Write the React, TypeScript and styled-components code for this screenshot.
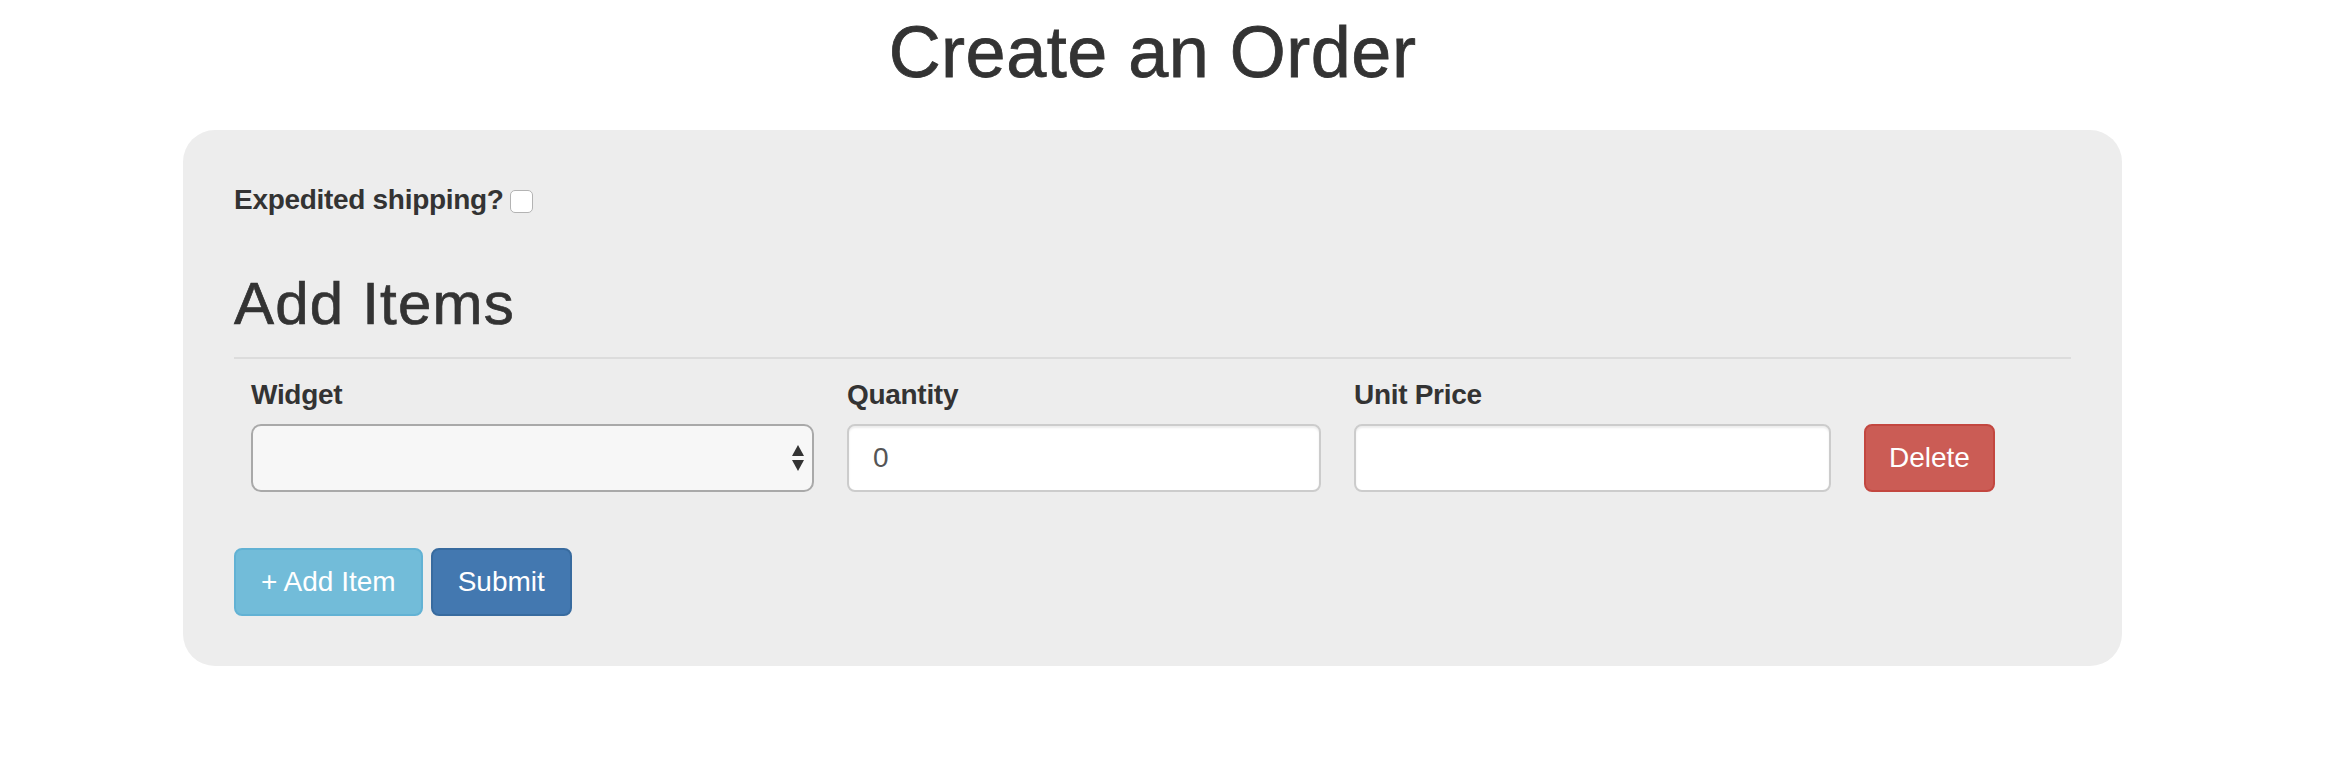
import React from "react";
import styled, { createGlobalStyle } from "styled-components";

const GlobalStyle = createGlobalStyle`
  html, body {
    margin: 0;
    padding: 0;
    background: #ffffff;
  }
  body {
    font-family: "Liberation Sans", Arial, Helvetica, sans-serif;
    font-size: 28px;
    line-height: 40px;
    color: #333333;
  }
  * { box-sizing: border-box; }
`;

const Page = styled.div`
  width: 2305px;
  padding: 13px 0 40px;
`;

const Title = styled.h1`
  margin: 0 0 38px;
  font-size: 72px;
  line-height: 79px;
  font-weight: 500;
  text-align: center;
  color: #333333;
  letter-spacing: 0.5px;
  -webkit-text-stroke: 0.8px #333333;
`;

const Jumbotron = styled.form`
  width: 1939px;
  margin: 0 auto;
  background: #ededed;
  border-radius: 32px;
  padding: 50px 51px 50px;
  display: flex;
  flex-direction: column;
`;

const CheckRow = styled.label`
  display: flex;
  align-items: center;
  height: 40px;
  font-weight: bold;
  font-size: 28px;
  line-height: 40px;
  letter-spacing: -0.3px;
`;

const Checkbox = styled.input.attrs({ type: "checkbox" })`
  appearance: none;
  -webkit-appearance: none;
  width: 23px;
  height: 23px;
  margin: 3px 0 0 6px;
  background: #ffffff;
  border: 1px solid #b3b3b3;
  border-radius: 5px;
`;

const SectionTitle = styled.h2`
  margin: 51px 0 0;
  font-size: 60px;
  line-height: 66px;
  font-weight: 500;
  color: #333333;
  letter-spacing: 1.2px;
  -webkit-text-stroke: 0.7px #333333;
`;

const Divider = styled.hr`
  margin: 20px 0 0;
  border: 0;
  height: 2px;
  background: #dcdcdc;
  width: 1837px;
`;

const ItemsGrid = styled.div`
  margin: 16px 0 0 17px;
  display: grid;
  grid-template-columns: 563px 474px 477px auto;
  column-gap: 33px;
  row-gap: 9px;
  align-items: start;
`;

const FieldLabel = styled.label`
  font-weight: bold;
  font-size: 28px;
  line-height: 40px;
  color: #333333;
  white-space: nowrap;
  letter-spacing: -0.3px;
`;

const SelectWrap = styled.div`
  position: relative;
  height: 68px;
`;

const Select = styled.select`
  appearance: none;
  -webkit-appearance: none;
  width: 100%;
  height: 68px;
  background: #f7f7f7;
  border: 2px solid #a9a9a9;
  border-radius: 10px;
  font-family: inherit;
  font-size: 28px;
  color: #555555;
  padding: 0 24px;
`;

const SelectArrows = styled.svg`
  position: absolute;
  right: 10px;
  top: 21px;
  width: 12px;
  height: 26px;
  pointer-events: none;
`;

const TextInput = styled.input`
  width: 100%;
  height: 68px;
  padding: 12px 24px;
  background: #ffffff;
  border: 2px solid #cccccc;
  border-radius: 8px;
  box-shadow: inset 0 2px 2px rgba(0, 0, 0, 0.075);
  font-family: inherit;
  font-size: 28px;
  color: #555555;
  outline: none;
`;

type Variant = "danger" | "info" | "primary";

const palette: Record<Variant, { bg: string; border: string; pad: number }> = {
  danger: { bg: "#cb5c55", border: "#c34740", pad: 23 },
  info: { bg: "#72bcd9", border: "#62b2d4", pad: 25 },
  primary: { bg: "#4378b0", border: "#386b9f", pad: 25 },
};

const Button = styled.button<{ $variant: Variant }>`
  height: 68px;
  padding: 0 ${(p) => palette[p.$variant].pad}px;
  border: 2px solid ${(p) => palette[p.$variant].border};
  background: ${(p) => palette[p.$variant].bg};
  border-radius: 8px;
  color: #ffffff;
  font-family: inherit;
  font-size: 28px;
  line-height: 40px;
  white-space: nowrap;
  cursor: pointer;
`;

const DeleteCell = styled.div`
  display: flex;
  align-items: flex-start;
`;

const Actions = styled.div`
  margin-top: 56px;
  display: flex;
  gap: 8px;
`;

export default function App() {
  return (
    <>
      <GlobalStyle />
      <Page>
        <Title>Create an Order</Title>
        <Jumbotron onSubmit={(e) => e.preventDefault()}>
          <CheckRow>
            Expedited shipping?
            <Checkbox />
          </CheckRow>
          <SectionTitle>Add Items</SectionTitle>
          <Divider />
          <ItemsGrid>
            <FieldLabel>Widget</FieldLabel>
            <FieldLabel>Quantity</FieldLabel>
            <FieldLabel>Unit Price</FieldLabel>
            <span />
            <SelectWrap>
              <Select defaultValue="">
                <option value=""></option>
              </Select>
              <SelectArrows viewBox="0 0 12 26">
                <path d="M6 0 L12 11 L0 11 Z" fill="#333333" />
                <path d="M0 15 L12 15 L6 26 Z" fill="#333333" />
              </SelectArrows>
            </SelectWrap>
            <TextInput type="text" defaultValue="0" />
            <TextInput type="text" defaultValue="" />
            <DeleteCell>
              <Button type="button" $variant="danger">Delete</Button>
            </DeleteCell>
          </ItemsGrid>
          <Actions>
            <Button type="button" $variant="info">+ Add Item</Button>
            <Button type="submit" $variant="primary">Submit</Button>
          </Actions>
        </Jumbotron>
      </Page>
    </>
  );
}
